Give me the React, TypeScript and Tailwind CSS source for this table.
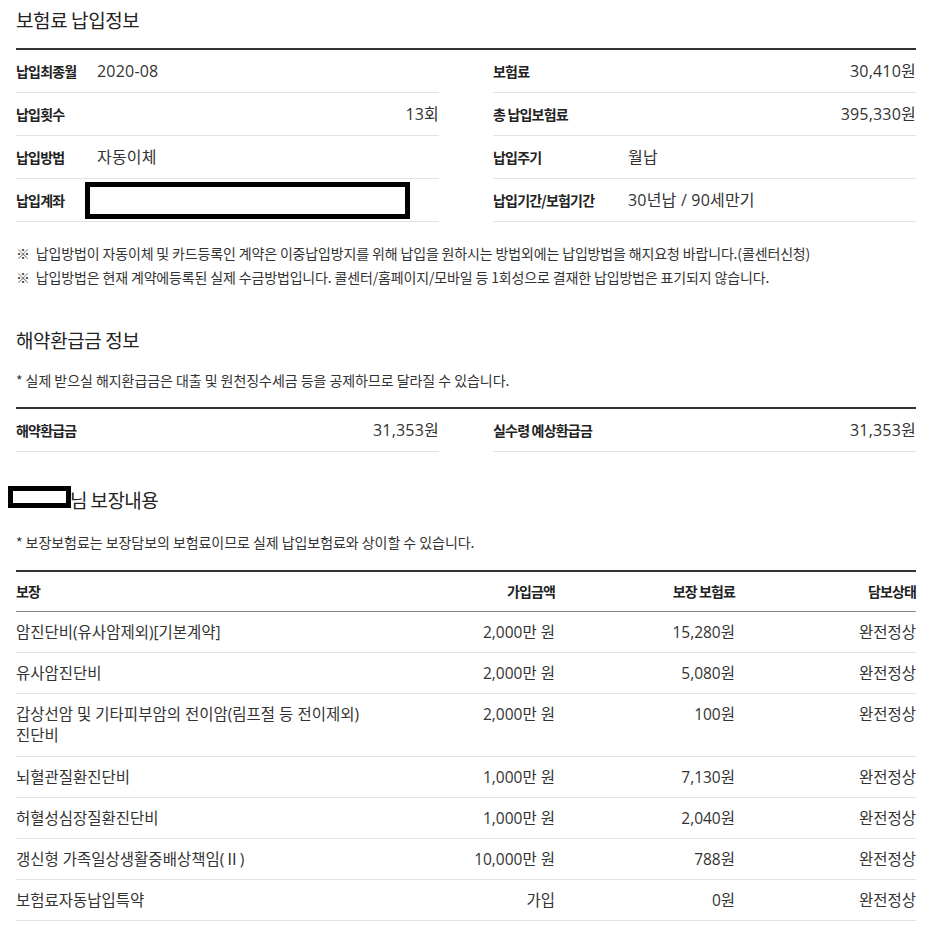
const font = { fontFamily: '"Noto Sans CJK KR", "Noto Sans", sans-serif' };
const numFont = { fontFamily: '"Open Sans", "Noto Sans CJK KR", sans-serif' };

const payLeft = [
  { label: "납입최종월", value: "2020-08", align: "left" },
  { label: "납입횟수", value: "13회", align: "right" },
  { label: "납입방법", value: "자동이체", align: "left" },
  { label: "납입계좌", value: "", align: "box" },
];

const payRight = [
  { label: "보험료", value: "30,410원", align: "right" },
  { label: "총 납입보험료", value: "395,330원", align: "right" },
  { label: "납입주기", value: "월납", align: "left" },
  { label: "납입기간/보험기간", value: "30년납 / 90세만기", align: "left" },
];

const coverages = [
  { name: ["암진단비(유사암제외)[기본계약]"], amount: "2,000만 원", premium: "15,280원" },
  { name: ["유사암진단비"], amount: "2,000만 원", premium: "5,080원" },
  { name: ["갑상선암 및 기타피부암의 전이암(림프절 등 전이제외)", "진단비"], amount: "2,000만 원", premium: "100원" },
  { name: ["뇌혈관질환진단비"], amount: "1,000만 원", premium: "7,130원" },
  { name: ["허혈성심장질환진단비"], amount: "1,000만 원", premium: "2,040원" },
  { name: ["갱신형 가족일상생활중배상책임(Ⅱ)"], amount: "10,000만 원", premium: "788원" },
  { name: ["보험료자동납입특약"], amount: "가입", premium: "0원" },
];

function InfoRow({ label, value, align, wide }: { label: string; value: string; align: string; wide?: boolean }) {
  return (
    <div className="flex h-[43px] items-center border-b border-[#e3e3e3]">
      <div className={`${wide ? "w-[135px]" : "w-[81px]"} shrink-0 text-[14px] font-bold tracking-[-0.8px] text-[#222]`}>{label}</div>
      {align === "box" ? (
        <div className="-ml-[12px] h-[37px] w-[325px] border-[5px] border-black" />
      ) : (
        <div className={`flex-1 text-[16px] tracking-[0.2px] text-[#333] ${align === "right" ? "text-right" : ""}`} style={numFont}>
          {value}
        </div>
      )}
    </div>
  );
}

export default function App() {
  return (
    <div className="min-h-screen bg-white pb-6" style={font}>
      <div className="ml-4 w-[900px]">
        {/* 보험료 납입정보 */}
        <h2 className="pt-[6px] text-[19px] leading-[28px] tracking-[-0.4px] text-[#222]">보험료 납입정보</h2>
        <div className="mt-[14px] flex gap-[54px] border-t-2 border-[#333]">
          <div className="flex-1">
            {payLeft.map((r) => (
              <InfoRow key={r.label} {...r} />
            ))}
          </div>
          <div className="flex-1">
            {payRight.map((r) => (
              <InfoRow key={r.label} {...r} wide />
            ))}
          </div>
        </div>
        <div className="mt-[19px] text-[14px] leading-[24px] tracking-[-0.15px] text-[#333]">
          <p>※&nbsp; 납입방법이 자동이체 및 카드등록인 계약은 이중납입방지를 위해 납입을 원하시는 방법외에는 납입방법을 해지요청 바랍니다.(콜센터신청)</p>
          <p>※&nbsp; 납입방법은 현재 계약에등록된 실제 수금방법입니다. 콜센터/홈페이지/모바일 등 1회성으로 결재한 납입방법은 표기되지 않습니다.</p>
        </div>

        {/* 해약환급금 정보 */}
        <h2 className="mt-[37px] text-[19px] leading-[28px] tracking-[-0.4px] text-[#222]">해약환급금 정보</h2>
        <p className="mt-[16px] text-[14px] leading-[20px] tracking-[-0.05px] text-[#333]">* 실제 받으실 해지환급금은 대출 및 원천징수세금 등을 공제하므로 달라질 수 있습니다.</p>
        <div className="mt-[17px] flex gap-[54px] border-t-2 border-[#333]">
          <div className="flex-1">
            <InfoRow label="해약환급금" value="31,353원" align="right" />
          </div>
          <div className="flex-1">
            <InfoRow label="실수령 예상환급금" value="31,353원" align="right" wide />
          </div>
        </div>

        {/* 보장내용 */}
        <h2 className="mt-[34px] flex items-center text-[19px] leading-[28px] tracking-[-0.6px] text-[#222]">
          <span className="-ml-2 mt-[-6px] h-[22px] w-[63px] border-[5px] border-black" />
          <span className="-ml-[1px]">님 보장내용</span>
        </h2>
        <p className="mt-[18px] text-[14px] leading-[20px] tracking-[-0.05px] text-[#333]">* 보장보험료는 보장담보의 보험료이므로 실제 납입보험료와 상이할 수 있습니다.</p>
        <div className="mt-[18px] border-t-2 border-[#333]">
          <div className="grid h-[40px] grid-cols-[370px_169px_180px_181px] items-center border-b border-[#888] text-[14px] font-bold tracking-[-0.9px] text-[#222]">
            <div>보장</div>
            <div className="text-right">가입금액</div>
            <div className="text-right">보장 보험료</div>
            <div className="text-right">담보상태</div>
          </div>
          {coverages.map((c) => (
            <div
              key={c.name[0]}
              className={`grid grid-cols-[370px_169px_180px_181px] items-start border-b border-[#e3e3e3] pt-[10px] text-[15.5px] leading-[21px] tracking-[0px] text-[#333] ${c.name.length > 1 ? "pb-[10px]" : "pb-[9px]"}`}
              style={numFont}
            >
              <div>
                {c.name.map((n) => (
                  <div key={n}>{n}</div>
                ))}
              </div>
              <div className="text-right">{c.amount}</div>
              <div className="text-right">{c.premium}</div>
              <div className="text-right">완전정상</div>
            </div>
          ))}
        </div>
      </div>
    </div>
  );
}
